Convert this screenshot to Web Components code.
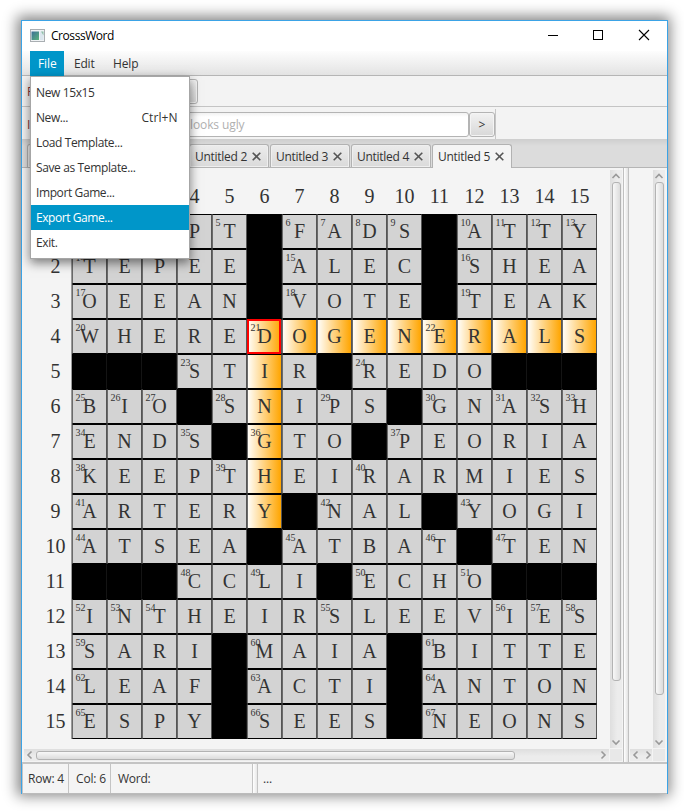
<!DOCTYPE html>
<html lang="en">
<head>
<meta charset="utf-8">
<title>CrosssWord</title>
<style>
html,body{margin:0;background:#fff}
body{width:684px;height:811px;overflow:hidden;font:12px/16px "Open Sans","Noto Sans",sans-serif;color:#333}
</style>
</head>
<body>
<app-window></app-window>
<script>
const define=(name,html,setup)=>customElements.define(name,class extends HTMLElement{
  connectedCallback(){
    if(this.shadowRoot)return;
    const root=this.attachShadow({mode:'open'});
    root.innerHTML=typeof html==='function'?html(this):html;
    if(setup)setup(this,root);
  }
});

/* Label spaced to occupy exactly `w` pixels. */
define('ui-text','<style>:host{display:inline-block;white-space:pre;flex:none}span{display:inline-block}</style><span><slot></slot></span>',(el,root)=>{
  const w=+el.getAttribute('w');
  if(!w||!el.textContent)return;
  const s=root.querySelector('span');
  const d=(w-s.getBoundingClientRect().width)/el.textContent.length;
  s.style.letterSpacing=d.toFixed(3)+'px';
  el.style.width=w+'px';
});

define('title-bar',`<style>
:host{display:flex;height:30px;background:#fff;align-items:center;color:#000;padding:0 0 0 8px;flex:none}
div{flex:1;padding-left:6px;height:16px}
svg{flex:none}
.ctl{margin:0 4px 2px 0}
.ico{margin-bottom:1px}
</style>
<svg class="ico" width="15" height="13" viewBox="0 0 15 13"><defs><linearGradient id="g" x1="0" y1="0" x2="1" y2="1"><stop offset="0" stop-color="#3c6f96"/><stop offset="1" stop-color="#5bb37c"/></linearGradient></defs>
<rect x=".5" y=".5" width="14" height="12" fill="#f0f3f5" stroke="#a9aeb2"/><rect x="1.500" y="2.500" width="7.500" height="8.500" fill="url(#g)"/><rect x="10" y="2.500" width="3.500" height="8.500" fill="#dbe6ee"/><path d="M11 2.500h2.500v4z" fill="#8fc0a8"/></svg>
<div><ui-text w="63">CrosssWord</ui-text></div>
<svg class="ctl" width="119" height="12" viewBox="0 0 119 12" fill="none" stroke="#000"><path d="M4 6.500h10"/><rect x="49.500" y="1.500" width="9" height="9"/><path d="M95 1l10 10M105 1l-10 10" stroke-width="1.100"/></svg>`);

define('menu-bar',`<style>
:host{display:flex;height:24px;padding-left:8px;background:linear-gradient(#fdfdfd,#e3e3e3);border-bottom:1px solid #b5b5b5;flex:none}
div{height:25px;line-height:25px;padding-left:8px}
.on{background:#0096c9;color:#fff;width:26px}
</style><div class="on"><ui-text w="18.500">File</ui-text></div><div style="padding-left:10px"><ui-text w="20.500">Edit</ui-text></div><div style="padding-left:18.500px"><ui-text w="25.500">Help</ui-text></div>`);

define('menu-item',el=>`<style>
:host{display:flex;height:25px;line-height:25px;padding:0 11.500px 0 5px;justify-content:space-between}
:host([active]){background:#0096c9;color:#fff}
</style><ui-text w="${el.getAttribute('w')}">${el.textContent}</ui-text>${el.hasAttribute('key')?`<ui-text w="36">${el.getAttribute('key')}</ui-text>`:''}`);

define('menu-popup',`<style>
:host{display:block;position:absolute;left:8px;top:55px;width:158px;padding:3px 0;background:#fff;border:1px solid #a6a6a6;box-shadow:0 4px 10px rgba(0,0,0,.5);z-index:5}
</style>
<menu-item w="58.500">New 15x15</menu-item><menu-item w="32" key="Ctrl+N">New...</menu-item><menu-item w="86.500">Load Template...</menu-item><menu-item w="99.500">Save as Template...</menu-item><menu-item w="78.500">Import Game...</menu-item><menu-item active w="76.500">Export Game...</menu-item><menu-item w="21.500">Exit.</menu-item>`);

define('push-button',`<style>
:host{display:block;box-sizing:border-box;height:25px;border:1px solid #b4b4b4;border-radius:3px;background:linear-gradient(#f2f2f2,#d8d8d8);box-shadow:inset 0 0 0 1px #f4f4f4;text-align:center;line-height:24px}
</style><slot></slot>`);

define('tool-bars',`<style>
:host{display:block;flex:none}
.row{display:flex;box-sizing:border-box;color:#8b3434;padding-left:5px;background:#f3f3f3}
.a{height:31px;border-bottom:1px solid #c4c4c4;padding-top:3px}
.b{height:32px;padding-top:5px}
.row>span{width:35px;line-height:25px}
.field{box-sizing:border-box;width:407px;height:25px;border:1px solid #b4b4b4;border-radius:3px;background:linear-gradient(#f2f2f2,#fff 4px);color:#b0b0b0;line-height:24px;padding-left:127px}
push-button{color:#333}
i{width:1px;background:#c6c6c6;margin:-3px 0 0 0;height:30px}
</style>
<div class="row a"><span>F</span><push-button style="width:136px"></push-button></div>
<div class="row b"><span>I</span><div class="field"><ui-text w="54.500">looks ugly</ui-text></div><push-button style="width:26px">&gt;</push-button><i></i></div>`);

define('doc-tab',el=>`<style>
:host{display:flex;box-sizing:border-box;width:80px;height:23px;border:1px solid #b2b2b2;border-bottom:0;border-radius:3px 3px 0 0;background:linear-gradient(#ececec,#dadada);box-shadow:inset 0 0 0 1px #efefef;padding-left:5px;line-height:24px;margin-right:1px}
:host([active]){background:#f4f4f4;height:24px;box-shadow:none}
svg{flex:none;margin:7px 0 0 4.500px}
</style><ui-text w="52">${el.textContent}</ui-text><svg width="9" height="9" viewBox="0 0 9 9"><path d="M.7 .7l7.600 7.600M8.300 .7L.7 8.300" stroke="#555" stroke-width="1.600"/></svg>`);

define('tab-strip',`<style>
:host{display:flex;height:29px;box-sizing:border-box;background:linear-gradient(#cecece,#dcdcdc 7px);border-bottom:1px solid #b5b5b5;padding:5px 0 0 5px;flex:none}
.under{visibility:hidden}
</style><doc-tab></doc-tab><doc-tab class="under"></doc-tab><doc-tab>Untitled 2</doc-tab><doc-tab>Untitled 3</doc-tab><doc-tab>Untitled 4</doc-tab><doc-tab active>Untitled 5</doc-tab>`);

define('scroll-bar',el=>{
  const v=el.hasAttribute('vertical'),len=el.getAttribute('thumb');
  return `<style>
:host{display:flex;flex-direction:${v?'column':'row'};background:linear-gradient(${v?'90deg':'180deg'},#dedede,#ececec 60%);${v?'width:12px':'height:12px'};align-items:center}
b{box-sizing:border-box;${v?`width:9px;height:${len}px`:`height:9px;width:${len}px`};border:1px solid #b3b3b3;border-radius:3px;background:linear-gradient(${v?'90deg':'180deg'},#f8f8f8,#dcdcdc)}
svg{flex:none}svg:last-child{margin-${v?'top':'left'}:auto}
path{fill:none;stroke:#999;stroke-width:1.600}
</style><svg width="12" height="12"><path d="${v?'M2.500 8l3.500-3.500L9.500 8':'M7.500 2.500L4 6l3.500 3.500'}"/></svg>${+len?'<b></b>':''}<svg width="12" height="12"><path d="${v?'M2.500 4.500L6 8l3.500-3.500':'M4.500 2.500L8 6l-3.500 3.500'}"/></svg>`;
});

define('grid-cell',el=>{
  const n=el.getAttribute('num');
  return `<style>
:host{display:grid;justify-items:center;position:relative;box-sizing:border-box;width:35px;height:35px;border:1px solid #000;border-left-color:#6a6a6a;border-right-color:#555;background:#d3d3d3;font:20px/22px "Liberation Serif","Times New Roman",serif;color:#333;padding-top:5px}
:host([black]){background:#000;border-color:#000;border-right-color:#141414}
:host([lit]){background:linear-gradient(90deg,#fffdf8,#ffa500)}
:host([focus])::after{content:"";position:absolute;left:-1px;top:-1px;width:30px;height:31px;border:2px solid #f00}
small{position:absolute;left:2.500px;top:2px;font-size:10px;line-height:12px}
</style>${n?`<small>${n}</small>`:''}<span>${el.getAttribute('ch')||''}</span>`;
});

const ROWS=['???PT#FADS#ATTY','TEPEE#ALEC#SHEA','OEEAN#VOTE#TEAK','WHEREDOGENERALS','###STIR#REDO###','BIO#SNIPS#GNASH','ENDS#GTO#PEORIA','KEEPTHEIRARMIES','ARTERY#NAL#YOGI','ATSEA#ATBAT#TEN','###CCLI#ECHO###','INTHEIRSLEEVIES','SARI#MAIA#BITTE','LEAF#ACTI#ANTON','ESPY#SEES#NEONS'];

define('cross-board',()=>{
  let n=0,cells='';
  const black=(r,c)=>r<0||c<0||ROWS[r][c]==='#';
  ROWS.forEach((row,r)=>{
    cells+=`<em class="r">${r?r+1:''}</em>`;
    [...row].forEach((ch,c)=>{
      if(ch==='#'){cells+='<grid-cell black></grid-cell>';return}
      const start=black(r-1,c)||black(r,c-1);
      if(start)n++;
      const lit=(r===3&&c>=5)||(c===5&&r>=3&&r<=8);
      const covered=r===0&&c<4;
      cells+=`<grid-cell ch="${ch==='?'?'':ch}"${start&&!covered?` num="${n}"`:''}${lit?' lit':''}${r===3&&c===5?' focus':''}></grid-cell>`;
    });
  });
  const heads=[...Array(15)].map((_,i)=>`<em>${i<3?'':i+1}</em>`).join('');
  return `<style>
:host{display:grid;grid-template-columns:49px repeat(15,35px);grid-template-rows:34px repeat(15,35px);padding:10px 0 0 1px;width:574px}
em{font:20px/32px "Liberation Serif","Times New Roman",serif;color:#333;text-align:center}
.r{padding-left:16px;line-height:35px;width:33px}
.r+grid-cell{box-shadow:-1px 0 #9a9a9a}
</style><em></em>${heads}${cells}`;
});

define('work-area',`<style>
:host{display:grid;grid-template-columns:588px 13px 6px 24px 12px 2px;grid-template-rows:579px 13px;height:596px;padding-top:2px;background:#f4f4f4;box-sizing:border-box;border-bottom:2px solid #c4c4c4;flex:none}
.div{grid-row:1/3;grid-column:3;border:solid #c0c0c0;border-width:0 1px;margin:-2px 0 0 0;background:linear-gradient(90deg,#fff,#e2e2e2)}
.corner{background:#e8e8e8;height:12px;width:12px}
cross-board{overflow:hidden;grid-area:1/1}
</style>
<cross-board></cross-board>
<scroll-bar vertical thumb="499" style="grid-area:1/2;height:578px"></scroll-bar>
<div class="div"></div>
<scroll-bar vertical thumb="513" style="grid-area:1/5;height:578px"></scroll-bar>
<scroll-bar thumb="479" style="grid-area:2/1;margin:0 1px 0 2px"></scroll-bar>
<div class="corner" style="grid-area:2/2"></div>
<scroll-bar thumb="0" style="grid-area:2/4;margin:0 1px"></scroll-bar>
<div class="corner" style="grid-area:2/5"></div>`);

define('status-bar',`<style>
:host{display:flex;flex:1;background:#f4f4f4;border-bottom:1px solid #bbb;border-left:1px solid #c4c4c4;line-height:29px}
div{border-right:1px solid #c4c4c4;box-sizing:border-box;padding-left:7px}
.gap{width:5px;padding:0;background:linear-gradient(90deg,#fff,#e8e8e8)}
</style><div style="width:46px;padding-left:5px"><ui-text w="36">Row: 4</ui-text></div><div style="width:42px"><ui-text w="30">Col: 6</ui-text></div><div style="width:142px"><ui-text w="32.500">Word:</ui-text></div><div class="gap"></div><div style="border:0;padding-left:5px"><ui-text w="9">...</ui-text></div>`);

define('app-window',`<style>
:host{display:flex;flex-direction:column;position:relative;box-sizing:border-box;width:647px;height:774px;margin:20px 0 0 21px;border:1px solid #3ba3e6;background:#f4f4f4;box-shadow:-1px -1px 13px 3px rgba(0,0,0,.48)}
</style><title-bar></title-bar><menu-bar></menu-bar><tool-bars></tool-bars><tab-strip></tab-strip><work-area></work-area><status-bar></status-bar><menu-popup></menu-popup>`);
</script>
</body>
</html>
